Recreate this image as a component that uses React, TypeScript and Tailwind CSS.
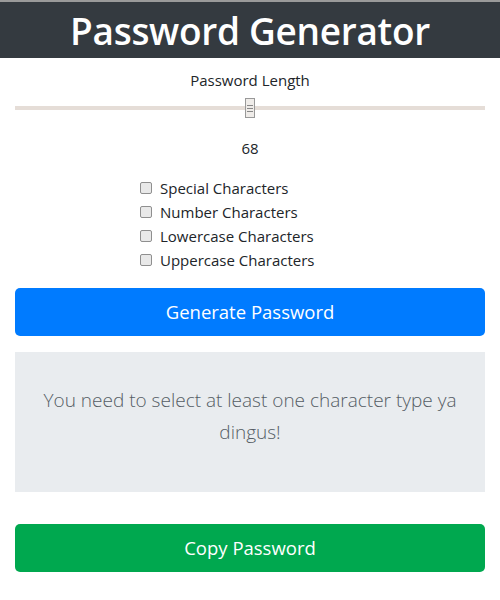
import { useState } from 'react';

const OPTIONS = [
  'Special Characters',
  'Number Characters',
  'Lowercase Characters',
  'Uppercase Characters',
];

export default function App() {
  const [length] = useState(68);
  const pct = ((length - 8) / (128 - 8)) * 100;

  return (
    <div className="min-h-[600px] bg-white text-[#212529]" style={{ fontFamily: '"Open Sans", "Noto Sans", sans-serif' }}>
      <header className="border-t-2 border-[#9a9a9a] bg-[#343a40] h-[58px] flex items-center justify-center">
        <h1 className="text-[37px] font-semibold text-white leading-none tracking-[-0.3px]">Password Generator</h1>
      </header>

      <div className="px-[15px]">
        <p className="mt-[10px] text-center text-[15px] leading-6">Password Length</p>

        <div className="relative mt-[6px] h-[20px] flex items-center">
          <div className="h-[4px] w-full bg-[#e5ddd7]" />
          <div
            className="absolute top-0 h-[20px] w-[10px] -translate-x-1/2 border border-[#999] bg-[#efece9] flex flex-col items-center justify-center gap-[2px]"
            style={{ left: `${pct}%` }}
          >
            <span className="block h-px w-[6px] bg-[#888]" />
            <span className="block h-px w-[6px] bg-[#888]" />
            <span className="block h-px w-[6px] bg-[#888]" />
          </div>
        </div>

        <p className="mt-[18px] text-center text-[15px] leading-6">{length}</p>

        <div className="mt-[16px] flex flex-col items-start pl-[125px]">
          {OPTIONS.map((o) => (
            <label key={o} className="flex items-center h-6 text-[15px]">
              <input
                type="checkbox"
                className="appearance-none m-0 mr-[8px] h-[12px] w-[12px] rounded-[2px] border border-[#8f8f8f] bg-[#e9e9e9]"
              />
              {o}
            </label>
          ))}
        </div>

        <button className="mt-[16px] h-[48px] w-full rounded-[5px] bg-[#007bff] text-[18.5px] text-white">
          Generate Password
        </button>

        <div className="mt-[16px] h-[140px] bg-[#e9ecef] px-[8px] pt-[32px]">
          <p className="text-center text-[19px] font-light leading-8 text-[#555d65]">
            You need to select at least one character type ya dingus!
          </p>
        </div>

        <button className="mt-[32px] h-[48px] w-full rounded-[5px] bg-[#00a84f] text-[18.5px] text-white">
          Copy Password
        </button>
      </div>
    </div>
  );
}
